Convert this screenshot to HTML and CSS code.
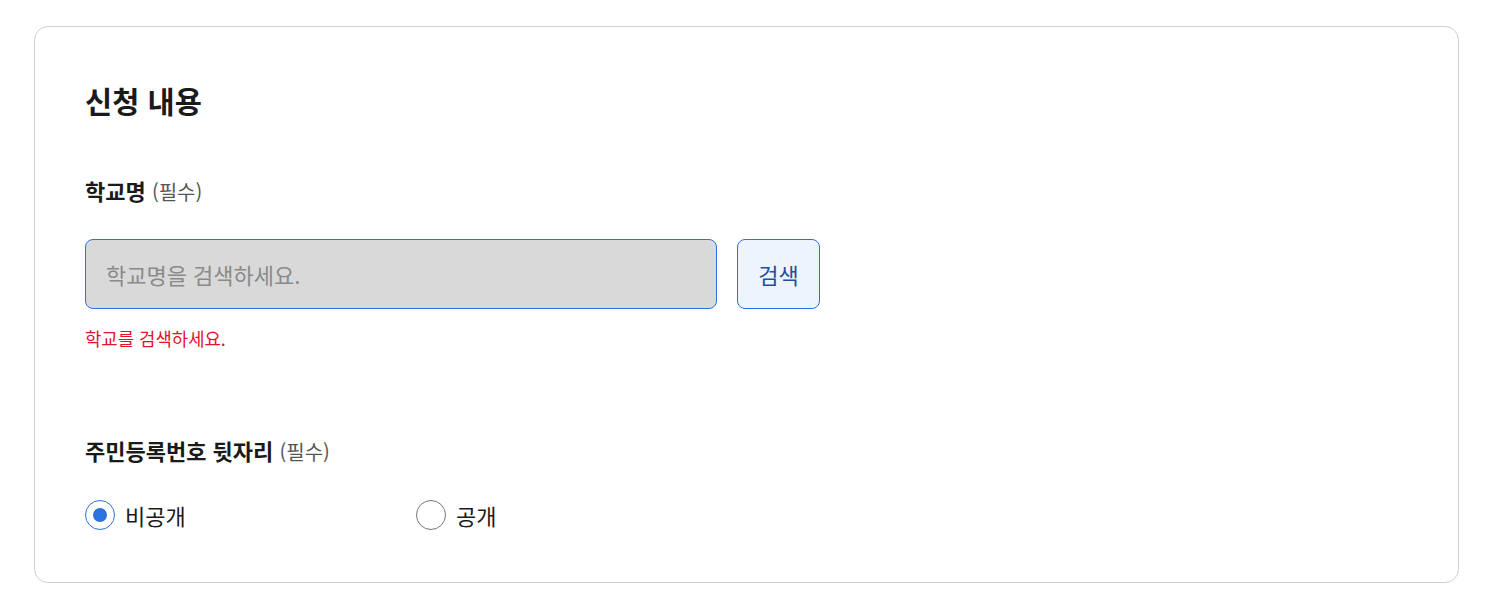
FILE: index.html
```html
<!DOCTYPE html>
<html lang="ko">
<head>
<meta charset="utf-8">
<title>신청 내용</title>
<link rel="stylesheet" href="styles.css">
</head>
<body>
<section class="card">
  <h2 class="card-title">신청 내용</h2>

  <div class="field">
    <div class="field-label">학교명 <span class="req">(필수)</span></div>
    <div class="search-row">
      <input class="search-input" type="text" placeholder="학교명을 검색하세요.">
      <button class="search-btn" type="button">검색</button>
    </div>
    <p class="error">학교를 검색하세요.</p>
  </div>

  <div class="field field-last">
    <div class="field-label">주민등록번호 뒷자리 <span class="req">(필수)</span></div>
    <div class="radio-row">
      <label class="radio">
        <input type="radio" name="rrn" checked>
        <span class="dot"></span>
        <span class="radio-text">비공개</span>
      </label>
      <label class="radio">
        <input type="radio" name="rrn">
        <span class="dot"></span>
        <span class="radio-text">공개</span>
      </label>
    </div>
  </div>
</section>
</body>
</html>
```

FILE: styles.css
```css
body {
	margin: 0;
	padding: 26px 42px 28px 34px;
	font-family: "Noto Sans CJK KR", "Noto Sans", sans-serif;
	color: #1a1a1a;
	background: #fff;
}
.card {
	border: 1px solid #cfcfcf;
	border-radius: 14px;
	padding: 50px 50px 51px;
}
.card-title {
	margin: 1px 0 0;
	font-size: 29.5px;
	font-weight: 700;
	line-height: 44px;
	height: 44px;
}
.field {
	margin-top: 53px;
}
.field-last {
	margin-top: 85px;
}
.field-label {
	font-size: 22px;
	font-weight: 700;
	line-height: 30px;
	height: 30px;
}
.req {
	font-size: 20px;
	font-weight: 400;
	color: #555;
}
.search-row {
	display: flex;
	gap: 20px;
	margin-top: 34px;
}
.search-input {
	width: 632px;
	height: 70px;
	box-sizing: border-box;
	border: 1px solid #2a72e0;
	border-radius: 8px;
	background: #d9d9d9;
	padding: 0 20px;
	font-family: inherit;
	font-size: 22px;
	color: #1a1a1a;
	outline: none;
}
.search-input::placeholder {
	color: #8a8a8a;
}
.search-btn {
	width: 83px;
	height: 70px;
	box-sizing: border-box;
	border: 1px solid #2a72e0;
	border-radius: 8px;
	background: #eef4fd;
	color: #1d4f9c;
	font-family: inherit;
	font-size: 22px;
}
.error {
	margin: 17px 0 0;
	font-size: 17.8px;
	line-height: 24px;
	color: #e4112b;
}
.radio-row {
	display: flex;
	margin-top: 34px;
}
.radio {
	display: flex;
	align-items: center;
	width: 331px;
	height: 32px;
	cursor: pointer;
}
.radio input {
	display: none;
}
.dot {
	width: 30px;
	height: 30px;
	box-sizing: border-box;
	border: 1px solid #777;
	border-radius: 50%;
	position: relative;
}
.radio input:checked + .dot {
	border-color: #2a72e0;
}
.radio input:checked + .dot::after {
	content: "";
	position: absolute;
	left: 7px;
	top: 7px;
	width: 14px;
	height: 14px;
	border-radius: 50%;
	background: #2a72e0;
}
.radio-text {
	margin-left: 10px;
	font-size: 22px;
	line-height: 30px;
}
```
